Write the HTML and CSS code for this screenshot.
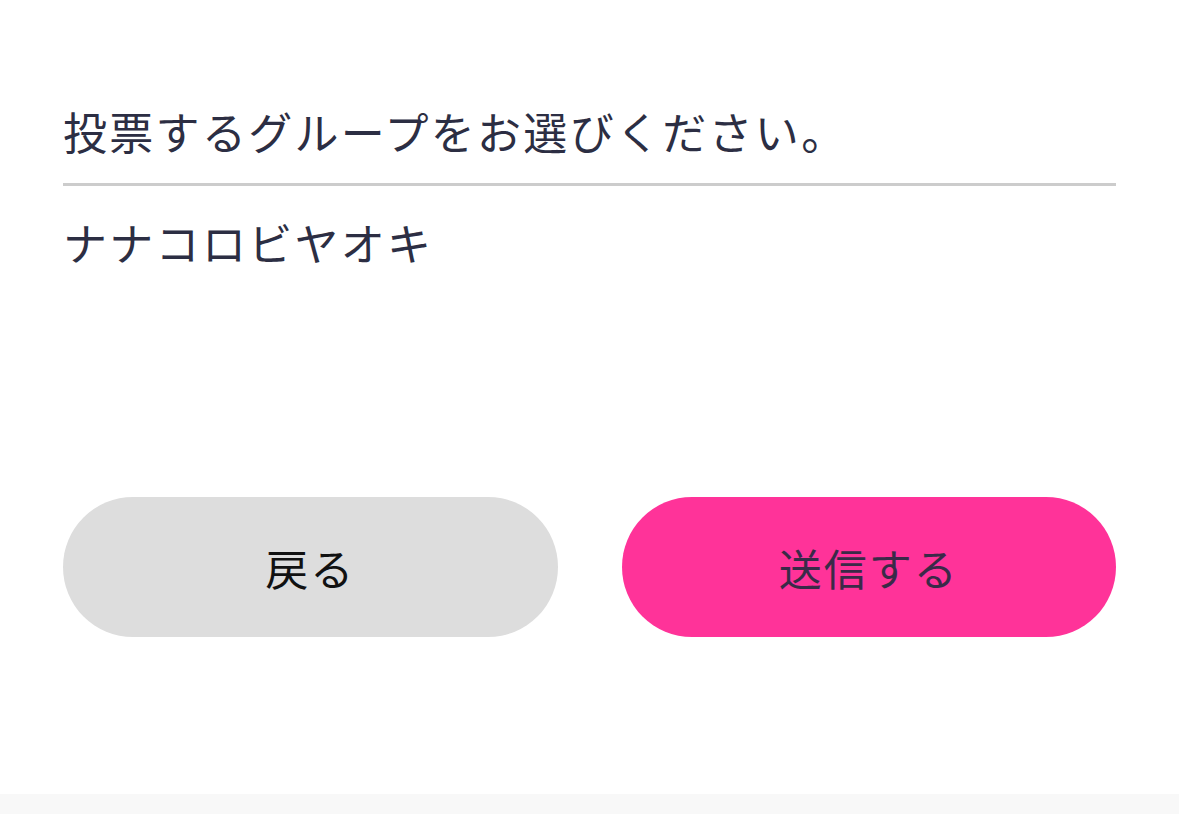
FILE: index.html
```html
<!DOCTYPE html>
<html lang="ja">
<head>
    <meta charset="UTF-8">
    <meta name="viewport" content="width=device-width, initial-scale=1.0">
    <title>投票</title>
    <link rel="stylesheet" href="styles.css">
</head>
<body>
    <div class="page">
        <main class="vote">
            <h1 class="vote-title">投票するグループをお選びください。</h1>
            <p class="vote-group">ナナコロビヤオキ</p>

            <div class="actions">
                <button class="btn btn-back" type="button">戻る</button>
                <button class="btn btn-submit" type="button">送信する</button>
            </div>
        </main>
        <footer class="footer"></footer>
    </div>
</body>
</html>
```

FILE: styles.css
```css
html, body {
    margin: 0;
    padding: 0;
    background: #fff;
}
body {
    font-family: "Noto Sans CJK JP", "Noto Sans", sans-serif;
    color: #2c2e43;
    letter-spacing: 2.3px;
}
.page {
    display: flex;
    flex-direction: column;
    min-height: 100vh;
}
.vote {
    flex: 1;
    padding: 98px 63px 0 63px;
}
.vote-title {
    margin: 0;
    padding-bottom: 19px;
    font-size: 44px;
    font-weight: 400;
    line-height: 66px;
    border-bottom: 3px solid #cccccc;
}
.vote-group {
    margin: 23px 0 0;
    font-size: 44px;
    line-height: 66px;
}
.actions {
    display: flex;
    gap: 64px;
    margin-top: 222px;
}
.btn {
    flex: 1;
    height: 140px;
    border: none;
    border-radius: 70px;
    font-family: inherit;
    font-size: 43px;
    letter-spacing: 2px;
    cursor: pointer;
}
.btn-back {
    background: #dddddd;
    color: #111;
}
.btn-submit {
    background: #ff3399;
    color: #3a2a48;
}
.footer {
    height: 20px;
    background: #f8f8f8;
}
```
